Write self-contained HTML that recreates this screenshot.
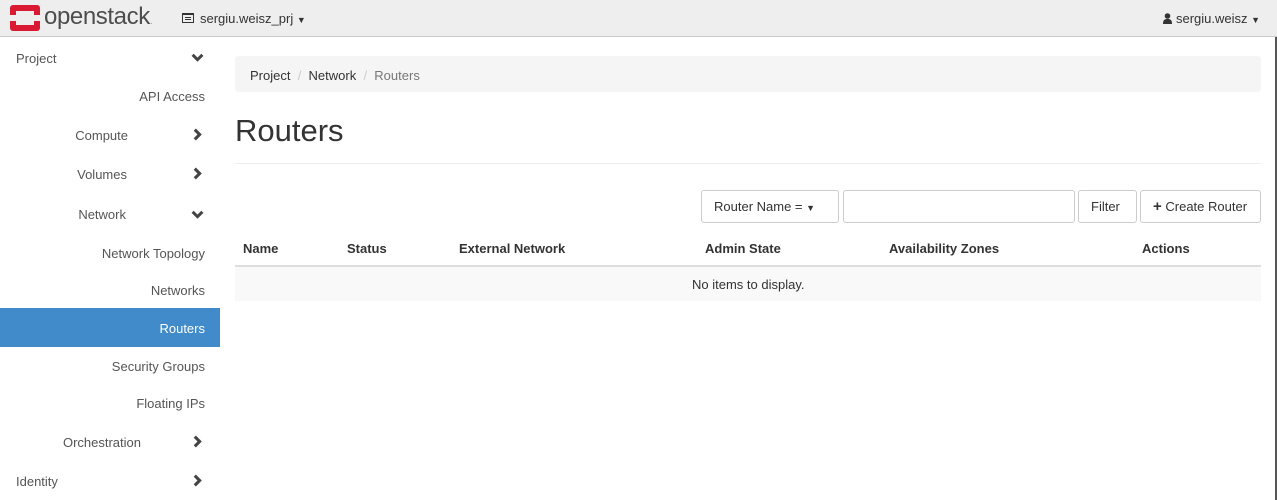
<!DOCTYPE html>
<html><head><style>
*{box-sizing:border-box;margin:0;padding:0}
body{width:1277px;height:500px;overflow:hidden;font-family:"Liberation Sans",sans-serif;font-size:13px;color:#333;background:#fff;position:relative}
.top{position:absolute;left:0;top:0;width:1277px;height:37px;background:#eee;border-bottom:1px solid #ccc}
.side{position:absolute;left:0;top:37px;width:220px;height:463px;background:#fff}
.si{position:absolute;right:15px;font-size:13px;color:#555}
.chev{position:absolute;left:191px;width:13px;height:13px}
.t{position:absolute;white-space:nowrap}
.btn{position:absolute;border:1px solid #ccc;border-radius:3px;background:#fff;height:33px;top:190px;font-size:13px;color:#333;line-height:31px;padding:0 12px}
</style></head><body>
<div class="top">
<svg style="position:absolute;left:10px;top:5px" width="30" height="26" viewBox="0 0 30 26"><rect width="30" height="26" rx="3" fill="#da1a32"/><rect x="6" y="6" width="18" height="14" fill="#eee"/><rect x="0" y="10" width="6" height="6" fill="#eee"/><rect x="24" y="10" width="6" height="6" fill="#eee"/></svg>
<div class="t" style="left:44px;top:3px;font-size:24px;color:#4d4d4d;letter-spacing:-0.4px">openstack<span style="font-size:10px;color:#999">.</span></div>
<svg style="position:absolute;left:182px;top:13px" width="12" height="10"><rect x=".5" y=".5" width="11" height="9" fill="none" stroke="#333"/><rect x="0" y="0" width="12" height="2" fill="#333"/><path d="M3 4.5h6M3 6.5h6" stroke="#333"/></svg>
<div class="t" style="left:200px;top:11px;font-size:13px">sergiu.weisz_prj <span style="font-size:9px">▼</span></div>
<svg style="position:absolute;left:1163px;top:13px" width="9" height="11" viewBox="0 0 9 11"><circle cx="4.5" cy="3" r="2.8" fill="#333"/><path d="M0 11c0-4 1.5-5 4.5-5s4.5 1 4.5 5z" fill="#333"/></svg>
<div class="t" style="left:1176px;top:11px;font-size:13px">sergiu.weisz <span style="font-size:9px">▼</span></div>
</div>
<div style="position:absolute;right:0;top:37px;width:2px;height:463px;background:#555"></div>
<div class="side">
<div class="t" style="left:16px;top:14px;color:#555">Project</div>
<div class="si" style="top:52px">API Access</div>
<div class="si" style="top:91px;right:92px">Compute</div>
<div class="si" style="top:130px;right:93px">Volumes</div>
<div class="si" style="top:170px;right:94px">Network</div>
<div class="si" style="top:209px">Network Topology</div>
<div class="si" style="top:246px">Networks</div>
<div style="position:absolute;left:0;top:271px;width:220px;height:39px;background:#428bca"></div>
<div class="si" style="top:284px;color:#fff">Routers</div>
<div class="si" style="top:322px">Security Groups</div>
<div class="si" style="top:359px">Floating IPs</div>
<div class="si" style="top:398px;right:79px">Orchestration</div>
<div class="t" style="left:16px;top:437px;color:#555">Identity</div>
<svg class="chev" style="top:14px" viewBox="0 0 12 12"><path d="M1.5 3.5l4.5 4.5 4.5-4.5" fill="none" stroke="#444" stroke-width="2.8"/></svg>
<svg class="chev" style="top:91px" viewBox="0 0 12 12"><path d="M3.5 1.5l4.5 4.5-4.5 4.5" fill="none" stroke="#444" stroke-width="2.8"/></svg>
<svg class="chev" style="top:130px" viewBox="0 0 12 12"><path d="M3.5 1.5l4.5 4.5-4.5 4.5" fill="none" stroke="#444" stroke-width="2.8"/></svg>
<svg class="chev" style="top:171px" viewBox="0 0 12 12"><path d="M1.5 3.5l4.5 4.5 4.5-4.5" fill="none" stroke="#444" stroke-width="2.8"/></svg>
<svg class="chev" style="top:398px" viewBox="0 0 12 12"><path d="M3.5 1.5l4.5 4.5-4.5 4.5" fill="none" stroke="#444" stroke-width="2.8"/></svg>
<svg class="chev" style="top:437px" viewBox="0 0 12 12"><path d="M3.5 1.5l4.5 4.5-4.5 4.5" fill="none" stroke="#444" stroke-width="2.8"/></svg>
</div>
<div style="position:absolute;left:235px;top:56px;width:1026px;height:36px;background:#f5f5f5;border-radius:3px"></div>
<div class="t" style="left:250px;top:68px">Project <span style="color:#ccc">&nbsp;/&nbsp;</span> Network <span style="color:#ccc">&nbsp;/&nbsp;</span> <span style="color:#777">Routers</span></div>
<div class="t" style="left:235px;top:113px;font-size:31px;color:#333">Routers</div>
<div style="position:absolute;left:235px;top:163px;width:1026px;height:1px;background:#eee"></div>
<div class="btn" style="left:701px;width:138px">Router Name = <span style="font-size:9px">▼</span></div>
<div class="btn" style="left:843px;width:232px"></div>
<div class="btn" style="left:1078px;width:59px">Filter</div>
<div class="btn" style="left:1140px;width:121px;padding:0 12px"><b style="font-size:15px">+</b> Create Router</div>
<div class="t" style="left:243px;top:241px;font-weight:bold">Name</div>
<div class="t" style="left:347px;top:241px;font-weight:bold">Status</div>
<div class="t" style="left:459px;top:241px;font-weight:bold">External Network</div>
<div class="t" style="left:705px;top:241px;font-weight:bold">Admin State</div>
<div class="t" style="left:889px;top:241px;font-weight:bold">Availability Zones</div>
<div class="t" style="left:1142px;top:241px;font-weight:bold">Actions</div>
<div style="position:absolute;left:235px;top:265px;width:1026px;height:2px;background:#ddd"></div>
<div style="position:absolute;left:235px;top:267px;width:1026px;height:34px;background:#f9f9f9"></div>
<div class="t" style="left:692px;top:277px">No items to display.</div>
</body></html>
